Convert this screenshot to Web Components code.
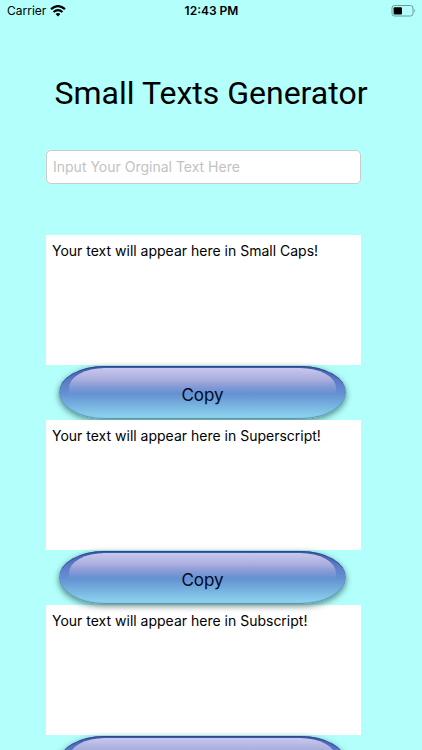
<!DOCTYPE html>
<html lang="en">
<head>
<meta charset="utf-8">
<meta name="viewport" content="width=device-width, initial-scale=1">
<title>Small Texts Generator</title>
<style>
	html { height: 100%; background: #b3fffb; }
	body { margin: 0; height: 100%; overflow: hidden; font-family: Inter, "Liberation Sans", sans-serif; color: #000; }
</style>
</head>
<body>
<small-texts-app></small-texts-app>
<script>
customElements.define("status-bar",
	class extends HTMLElement {
		connectedCallback(){
			this.attachShadow({ mode: "open" });
			this.shadowRoot.innerHTML = `
				<style>
					:host { display: grid; grid-template-columns: 1fr auto 1fr; align-items: center; height: 22px; padding: 0 6px 0 7px; font-size: 12px; line-height: 22px; }
					.carrier { display: flex; align-items: center; gap: 4px; }
					.time { font-weight: 600; }
					.battery { justify-self: end; }
					svg { display: block; }
				</style>
				<div class="carrier">
					<slot name="carrier"></slot>
					<svg width="16" height="12" viewBox="0 0 16 12" aria-hidden="true">
						<path d="M1 4.2Q8-1.9 15 4.2" fill="none" stroke="#000" stroke-width="2.3"/>
						<path d="M3.5 7Q8 3.2 12.5 7" fill="none" stroke="#000" stroke-width="2.1"/>
						<path d="M5.6 8.9Q8 7 10.4 8.9L8 11.5Z"/>
					</svg>
				</div>
				<div class="time"><slot name="time"></slot></div>
				<svg class="battery" width="25" height="12" viewBox="0 0 25 12" role="img" aria-label="Battery">
					<rect x="1" y=".5" width="21" height="10.5" rx="2.5" fill="none" stroke="#6b9c98"/>
					<rect x="2.6" y="2.2" width="8.4" height="7.2" rx="1"/>
					<path d="M23.4 3.8Q25 5.7 23.4 7.6Z" fill="#5c8784"/>
				</svg>
			`;
		}
	}
);

customElements.define("text-input",
	class extends HTMLElement {
		connectedCallback(){
			this.attachShadow({ mode: "open" });
			this.shadowRoot.innerHTML = `
				<style>
					:host { display: block; }
					input { display: block; box-sizing: border-box; width: 100%; height: 34px; margin: 0; padding: 0 6px 2px; border: 1px solid #c8cccc; border-radius: 5px; background: #fff; font: inherit; font-size: 14px; color: #000; outline: none; }
					input::placeholder { color: #c2c2c4; opacity: 1; }
				</style>
				<input type="text">
			`;
			const input = this.shadowRoot.querySelector("input");
			input.placeholder = this.getAttribute("placeholder");
			input.setAttribute("aria-label", this.getAttribute("placeholder"));
		}
	}
);

customElements.define("gel-button",
	class extends HTMLElement {
		connectedCallback(){
			this.attachShadow({ mode: "open" });
			this.shadowRoot.innerHTML = `
				<style>
					:host { display: block; }
					button {
						display: grid; place-items: center; box-sizing: border-box; width: 100%; height: 53px; margin: 0; padding: 4px 0 0;
						border: 0; border-radius: 46px / 27px;
						background: linear-gradient(#4059a6, #5c7cca 28%, #6490d2 52%, #7ab8e2 78%, #8cd2ee 96%);
						box-shadow: 0 2px 6px rgba(10, 50, 50, .6), inset 0 2px 1px -1px #2c468c, inset 0 -1px 1px #5a93ac;
						font: inherit; font-size: 17px; color: #000a20;
					}
					button::before {
						content: ""; grid-area: 1 / 1; justify-self: stretch; align-self: start; height: 26px; margin: -2px 10px 0;
						border-radius: 36px 36px 0 0 / 20px 20px 0 0;
						background: linear-gradient(#c8c8ee, #a9aedd 45%, rgba(112, 145, 210, 0));
					}
					span { grid-area: 1 / 1; position: relative; }
				</style>
				<button type="button"><span><slot></slot></span></button>
			`;
		}
	}
);

customElements.define("text-result",
	class extends HTMLElement {
		connectedCallback(){
			this.attachShadow({ mode: "open" });
			this.shadowRoot.innerHTML = `
				<style>
					:host { display: block; }
					textarea { display: block; box-sizing: border-box; width: 100%; height: 130px; margin: 0; padding: 7px 6px; border: 0; border-radius: 0; background: #fff; resize: none; outline: none; font: inherit; font-size: 14px; line-height: 18px; color: #000; }
					gel-button { padding: 1px 15px 0 13px; }
				</style>
				<textarea readonly></textarea>
				<gel-button>Copy</gel-button>
			`;
			const area = this.shadowRoot.querySelector("textarea");
			area.textContent = `Your text will appear here in ${this.getAttribute("kind")}!`;
			area.setAttribute("aria-label", this.getAttribute("kind"));
			this.shadowRoot.querySelector("gel-button").addEventListener("click", () => {
				area.select();
				document.execCommand("copy");
			});
		}
	}
);

customElements.define("small-texts-app",
	class extends HTMLElement {
		connectedCallback(){
			this.attachShadow({ mode: "open" });
			this.shadowRoot.innerHTML = `
				<style>
					:host { display: flex; flex-direction: column; height: 100%; }
					h1 { margin: 50px 0 36px; font-family: Roboto, sans-serif; font-size: 32px; font-weight: 400; line-height: 42px; text-align: center; }
					main { flex: 1; min-height: 0; overflow-y: auto; scrollbar-width: none; padding: 0 61px 0 46px; }
					.results { display: grid; gap: 1px; margin-top: 51px; }
					/* the middle button casts its shadow on the box below it */
					text-result:nth-child(2) { position: relative; z-index: 1; }
				</style>
				<status-bar><span slot="carrier">Carrier</span><span slot="time">12:43 PM</span></status-bar>
				<h1>Small Texts Generator</h1>
				<main>
					<text-input placeholder="Input Your Orginal Text Here"></text-input>
					<div class="results">
						<text-result kind="Small Caps"></text-result>
						<text-result kind="Superscript"></text-result>
						<text-result kind="Subscript"></text-result>
					</div>
				</main>
			`;
		}
	}
);
</script>
</body>
</html>
